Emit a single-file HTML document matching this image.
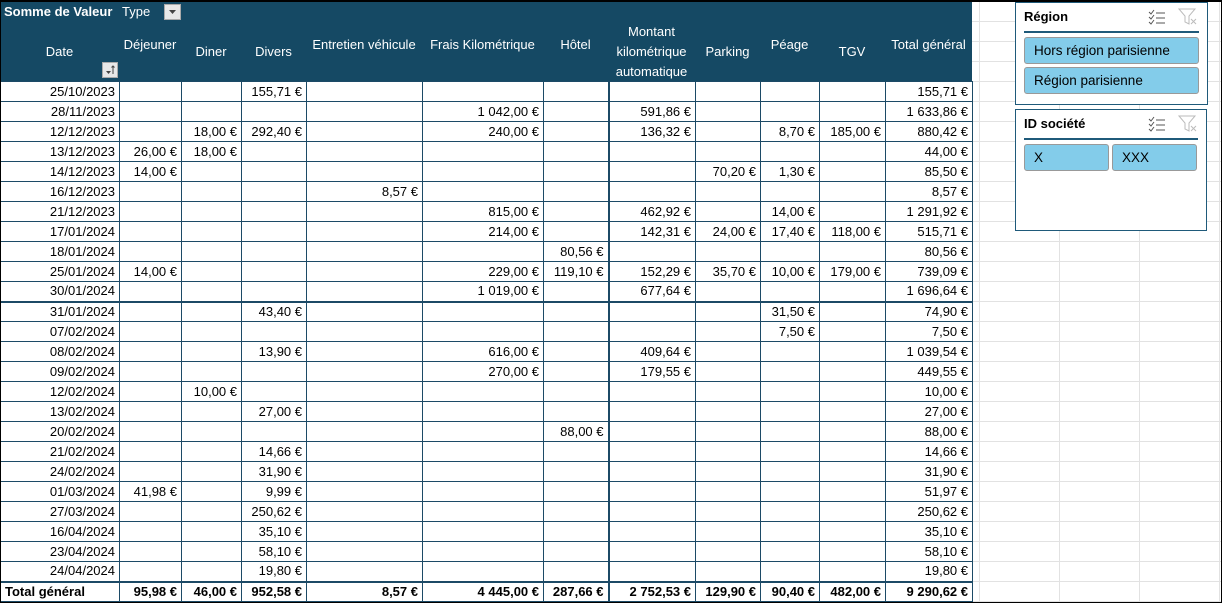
<!DOCTYPE html>
<html><head><meta charset="utf-8"><style>
*{margin:0;padding:0;box-sizing:border-box}
body{width:1222px;height:603px;overflow:hidden;background:#fff;font-family:"Liberation Sans",sans-serif;font-size:13px;color:#000;position:relative;
background-image:linear-gradient(#e2e2e2 1px,transparent 1px),linear-gradient(90deg,#e2e2e2 1px,transparent 1px);
background-size:100% 20px,80px 100%;background-position:0 1px,19px 0}
.frame{position:absolute;left:0;top:0;width:1222px;height:603px;border:1px solid #000;border-top:2px solid #000;pointer-events:none}
.hdr{position:absolute;left:0;top:2px;width:972px;height:79px;background:#154964;color:#fff;font-size:13px}
.hdr div{position:absolute;text-align:center;line-height:20px}
table{position:absolute;left:0;top:81px;border-collapse:collapse;table-layout:fixed;width:972px;background:#fff}
td{height:20px;border:1px solid #1c4a66;text-align:right;padding:0 4px 0 2px;white-space:nowrap;font-size:13px;line-height:18px}
tr.sep td{border-bottom:2px solid #1c4a66}
tr.tot td{font-weight:bold;border-top:2px solid #1c4a66}
tr.tot td:first-child{text-align:left;padding-left:4px}
td:nth-child(8){border-left:2px solid #1c4a66}
.sl{position:absolute;background:#fff;border:1px solid #1f5a7a}
.sl .t{position:absolute;left:8px;top:6px;font-weight:bold;font-size:13px}
.sl .ln{position:absolute;left:8px;right:8px;top:28px;border-top:2px solid #1f5a7a}
.b{position:absolute;height:27px;background:#83ccea;border:1px solid #999;border-radius:3px;font-size:13.5px;line-height:25px;padding-left:9px}
</style></head><body>
<div class="hdr">
<div style="left:4px;top:0;font-weight:bold;text-align:left">Somme de Valeur</div>
<div style="left:122px;top:0;text-align:left">Type</div>
<div style="left:164px;top:2px;width:17px;height:16px;background:#e8e8e8;border:1px solid #aaa"><svg width="15" height="14" style="position:absolute;left:0;top:0"><path d="M4 5h7l-3.5 4z" fill="#444"/></svg></div>
<div style="left:0;top:40px;width:119px">Date</div>
<div style="left:102px;top:60px;width:16px;height:16px;background:#e8e8e8;border:1px solid #aaa"><svg width="14" height="14" style="position:absolute;left:0;top:0"><path d="M3 8h5l-2.5 3z" fill="#444"/><path d="M10 3v8M8.5 4.5l1.5-1.5 1.5 1.5" stroke="#444" fill="none"/></svg></div>
<div style="left:119px;top:33px;width:62px">Déjeuner</div>
<div style="left:181px;top:40px;width:60px">Diner</div>
<div style="left:241px;top:40px;width:65px">Divers</div>
<div style="left:306px;top:33px;width:116px">Entretien véhicule</div>
<div style="left:422px;top:33px;width:121px">Frais Kilométrique</div>
<div style="left:543px;top:33px;width:65px">Hôtel</div>
<div style="left:608px;top:20px;width:87px">Montant<br>kilométrique<br>automatique</div>
<div style="left:695px;top:40px;width:65px">Parking</div>
<div style="left:760px;top:33px;width:59px">Péage</div>
<div style="left:819px;top:40px;width:66px">TGV</div>
<div style="left:885px;top:33px;width:87px">Total général</div>
</div>
<table>
<colgroup><col style="width:119px"><col style="width:62px"><col style="width:60px"><col style="width:65px"><col style="width:116px"><col style="width:121px"><col style="width:65px"><col style="width:87px"><col style="width:65px"><col style="width:59px"><col style="width:66px"><col style="width:87px"></colgroup>
<tr><td>25/10/2023</td><td></td><td></td><td>155,71 €</td><td></td><td></td><td></td><td></td><td></td><td></td><td></td><td>155,71 €</td></tr>
<tr><td>28/11/2023</td><td></td><td></td><td></td><td></td><td>1 042,00 €</td><td></td><td>591,86 €</td><td></td><td></td><td></td><td>1 633,86 €</td></tr>
<tr><td>12/12/2023</td><td></td><td>18,00 €</td><td>292,40 €</td><td></td><td>240,00 €</td><td></td><td>136,32 €</td><td></td><td>8,70 €</td><td>185,00 €</td><td>880,42 €</td></tr>
<tr><td>13/12/2023</td><td>26,00 €</td><td>18,00 €</td><td></td><td></td><td></td><td></td><td></td><td></td><td></td><td></td><td>44,00 €</td></tr>
<tr><td>14/12/2023</td><td>14,00 €</td><td></td><td></td><td></td><td></td><td></td><td></td><td>70,20 €</td><td>1,30 €</td><td></td><td>85,50 €</td></tr>
<tr><td>16/12/2023</td><td></td><td></td><td></td><td>8,57 €</td><td></td><td></td><td></td><td></td><td></td><td></td><td>8,57 €</td></tr>
<tr><td>21/12/2023</td><td></td><td></td><td></td><td></td><td>815,00 €</td><td></td><td>462,92 €</td><td></td><td>14,00 €</td><td></td><td>1 291,92 €</td></tr>
<tr><td>17/01/2024</td><td></td><td></td><td></td><td></td><td>214,00 €</td><td></td><td>142,31 €</td><td>24,00 €</td><td>17,40 €</td><td>118,00 €</td><td>515,71 €</td></tr>
<tr><td>18/01/2024</td><td></td><td></td><td></td><td></td><td></td><td>80,56 €</td><td></td><td></td><td></td><td></td><td>80,56 €</td></tr>
<tr><td>25/01/2024</td><td>14,00 €</td><td></td><td></td><td></td><td>229,00 €</td><td>119,10 €</td><td>152,29 €</td><td>35,70 €</td><td>10,00 €</td><td>179,00 €</td><td>739,09 €</td></tr>
<tr class="sep"><td>30/01/2024</td><td></td><td></td><td></td><td></td><td>1 019,00 €</td><td></td><td>677,64 €</td><td></td><td></td><td></td><td>1 696,64 €</td></tr>
<tr><td>31/01/2024</td><td></td><td></td><td>43,40 €</td><td></td><td></td><td></td><td></td><td></td><td>31,50 €</td><td></td><td>74,90 €</td></tr>
<tr><td>07/02/2024</td><td></td><td></td><td></td><td></td><td></td><td></td><td></td><td></td><td>7,50 €</td><td></td><td>7,50 €</td></tr>
<tr><td>08/02/2024</td><td></td><td></td><td>13,90 €</td><td></td><td>616,00 €</td><td></td><td>409,64 €</td><td></td><td></td><td></td><td>1 039,54 €</td></tr>
<tr><td>09/02/2024</td><td></td><td></td><td></td><td></td><td>270,00 €</td><td></td><td>179,55 €</td><td></td><td></td><td></td><td>449,55 €</td></tr>
<tr><td>12/02/2024</td><td></td><td>10,00 €</td><td></td><td></td><td></td><td></td><td></td><td></td><td></td><td></td><td>10,00 €</td></tr>
<tr><td>13/02/2024</td><td></td><td></td><td>27,00 €</td><td></td><td></td><td></td><td></td><td></td><td></td><td></td><td>27,00 €</td></tr>
<tr><td>20/02/2024</td><td></td><td></td><td></td><td></td><td></td><td>88,00 €</td><td></td><td></td><td></td><td></td><td>88,00 €</td></tr>
<tr><td>21/02/2024</td><td></td><td></td><td>14,66 €</td><td></td><td></td><td></td><td></td><td></td><td></td><td></td><td>14,66 €</td></tr>
<tr><td>24/02/2024</td><td></td><td></td><td>31,90 €</td><td></td><td></td><td></td><td></td><td></td><td></td><td></td><td>31,90 €</td></tr>
<tr><td>01/03/2024</td><td>41,98 €</td><td></td><td>9,99 €</td><td></td><td></td><td></td><td></td><td></td><td></td><td></td><td>51,97 €</td></tr>
<tr><td>27/03/2024</td><td></td><td></td><td>250,62 €</td><td></td><td></td><td></td><td></td><td></td><td></td><td></td><td>250,62 €</td></tr>
<tr><td>16/04/2024</td><td></td><td></td><td>35,10 €</td><td></td><td></td><td></td><td></td><td></td><td></td><td></td><td>35,10 €</td></tr>
<tr><td>23/04/2024</td><td></td><td></td><td>58,10 €</td><td></td><td></td><td></td><td></td><td></td><td></td><td></td><td>58,10 €</td></tr>
<tr><td>24/04/2024</td><td></td><td></td><td>19,80 €</td><td></td><td></td><td></td><td></td><td></td><td></td><td></td><td>19,80 €</td></tr>
<tr class="tot"><td>Total général</td><td>95,98 €</td><td>46,00 €</td><td>952,58 €</td><td>8,57 €</td><td>4 445,00 €</td><td>287,66 €</td><td>2 752,53 €</td><td>129,90 €</td><td>90,40 €</td><td>482,00 €</td><td>9 290,62 €</td></tr>
</table>
<div class="sl" style="left:1015px;top:2px;width:193px;height:103px">
<div class="t">Région</div>
<svg style="position:absolute;left:132px;top:6px" width="18" height="16"><path d="M1 3l2 2 3-4M1 8l2 2 3-4M1 13l2 2 3-4M8 4h9M8 9h9M8 14h9" stroke="#555" fill="none" stroke-width="1"/></svg>
<svg style="position:absolute;left:162px;top:5px" width="20" height="18"><path d="M1 1h16l-6 7v8l-4-2v-6z" stroke="#bbb" fill="none"/><path d="M13 11l5 5M18 11l-5 5" stroke="#bbb"/></svg>
<div class="ln"></div>
<div class="b" style="left:8px;top:34px;width:175px">Hors région parisienne</div>
<div class="b" style="left:8px;top:64px;width:175px">Région parisienne</div>
</div>
<div class="sl" style="left:1015px;top:109px;width:192px;height:122px">
<div class="t">ID société</div>
<svg style="position:absolute;left:132px;top:6px" width="18" height="16"><path d="M1 3l2 2 3-4M1 8l2 2 3-4M1 13l2 2 3-4M8 4h9M8 9h9M8 14h9" stroke="#555" fill="none" stroke-width="1"/></svg>
<svg style="position:absolute;left:162px;top:5px" width="20" height="18"><path d="M1 1h16l-6 7v8l-4-2v-6z" stroke="#bbb" fill="none"/><path d="M13 11l5 5M18 11l-5 5" stroke="#bbb"/></svg>
<div class="ln"></div>
<div class="b" style="left:8px;top:34px;width:85px">X</div>
<div class="b" style="left:96px;top:34px;width:85px">XXX</div>
</div>
<div class="frame"></div>
</body></html>
